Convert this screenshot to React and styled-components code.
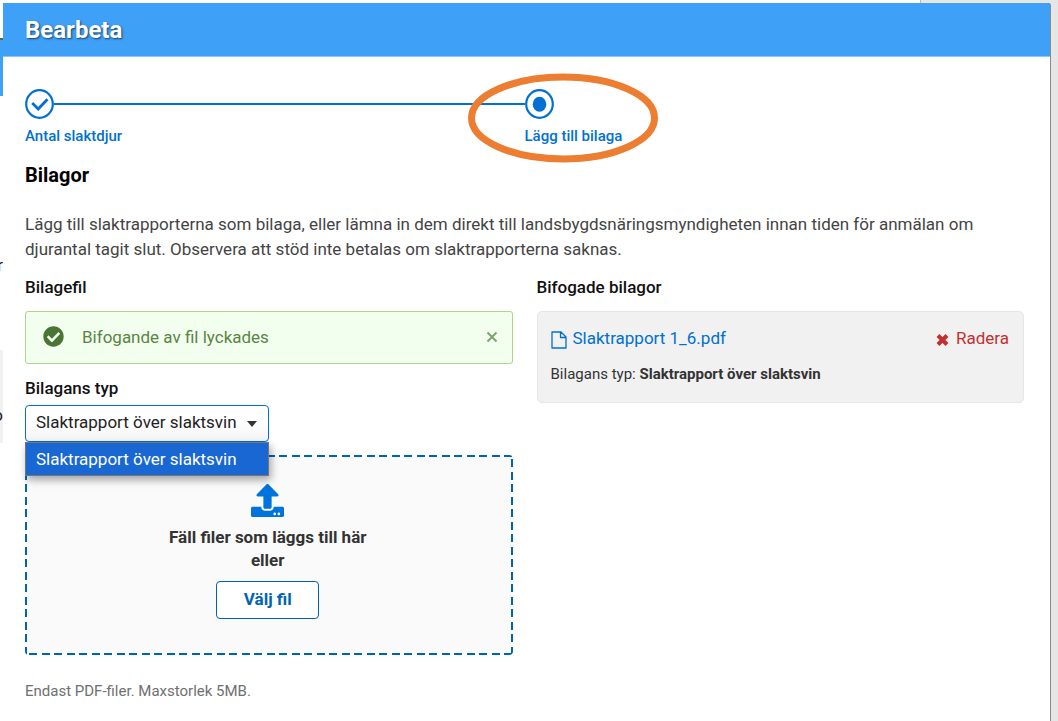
import React from "react";
import styled, { createGlobalStyle } from "styled-components";
import { FaCheckCircle, FaUpload } from "react-icons/fa";

const blue = "#0070d2";
const brand = "#3ea0f6";

const GlobalStyle = createGlobalStyle`
  *, *::before, *::after { box-sizing: border-box; }
  html, body { margin: 0; }
  body {
    background: #fff;
    color: #444;
    font-family: Roboto, "Liberation Sans", sans-serif;
    font-size: 17px;
    line-height: 24px;
  }
  h1, h2, h3, p, ul, ol { margin: 0; padding: 0; }
  ul, ol { list-style: none; }
  button, select { font: inherit; }
`;

const Page = styled.div`
  display: grid;
  grid-template-columns: 3px 1fr 7px;
  min-height: 100vh;
  overflow: hidden;
`;

const Behind = styled.div`
  display: flex;
  flex-direction: column;
  overflow: hidden;
`;

const Strip = styled.div`
  flex: none;
  height: ${(p) => p.$height}px;
  background: ${(p) => p.$color || "transparent"};
  display: flex;
  align-items: center;
  justify-content: flex-end;
  color: #222;
`;

const Gutter = styled.div`
  background: #e6e6e6;
`;

const Main = styled.div`
  display: flex;
  flex-direction: column;
  min-width: 0;
`;

const PageEdge = styled.div`
  display: grid;
  grid-template-columns: 7fr 1fr;
  height: 3px;
`;

const EdgeShade = styled.div`
  background: #e6e6e6;
  border-left: 1px solid #bbb;
`;

const Dialog = styled.section`
  flex: 1;
  background: #fff;
  border-right: 1px solid #8a8a8a;
  border-top-right-radius: 2px;
`;

const Header = styled.header`
  height: 54px;
  padding: 1px 22px 0;
  display: flex;
  align-items: center;
  background: ${brand};
  border-bottom: 1px solid #8cc6fa;
`;

const Title = styled.h1`
  color: #fff;
  font-size: 24px;
  line-height: 28px;
  font-weight: 700;
  text-shadow: 1px 1px 2px rgba(0, 0, 0, 0.6);
`;

const Content = styled.div`
  padding: 32px 26px 20px 22px;
`;

const Steps = styled.ol`
  display: grid;
  grid-template-columns: 1fr 1fr;
`;

const Step = styled.li`
  position: relative;
  color: ${blue};
  font-size: 15px;
  line-height: 20px;
  font-weight: 500;
`;

const StepTrack = styled.div`
  display: flex;
  align-items: center;
  margin-bottom: 7px;
  svg { flex: none; display: block; }
`;

const StepLine = styled.div`
  flex: 1;
  height: 2px;
  background: ${blue};
`;

const Highlight = styled.svg`
  position: absolute;
  left: -57px;
  top: -16px;
  pointer-events: none;
`;

const SectionTitle = styled.h2`
  margin-top: 17px;
  color: #000;
  font-size: 20px;
  line-height: 24px;
  font-weight: 700;
`;

const Intro = styled.p`
  margin-top: 25px;
  font-size: 17px;
  line-height: 25px;
`;

const Columns = styled.div`
  display: grid;
  grid-template-columns: 1fr 1fr;
  gap: 24px;
  align-items: start;
  margin-top: 13px;
`;

const Heading = styled.h3`
  margin-bottom: 12px;
  color: #111;
  font-size: 17px;
  line-height: 24px;
  font-weight: 500;
`;

const Alert = styled.div`
  display: flex;
  align-items: center;
  height: 53px;
  padding: 0 14px 2px 17px;
  border: 1px solid #aed58a;
  border-radius: 3px;
  background: #f3ffee;
  color: #5a8446;
  > svg { flex: none; color: #4b7535; }
`;

const AlertText = styled.span`
  flex: 1;
  margin-left: 18px;
`;

const CloseButton = styled.button`
  display: flex;
  padding: 0;
  border: 0;
  background: none;
  color: #7fa370;
`;

const Label = styled.label`
  display: block;
  margin: 12px 0 5px;
  color: #111;
  font-weight: 500;
`;

const SelectBox = styled.div`
  position: relative;
  width: 244px;
`;

const Select = styled.select`
  display: block;
  width: 100%;
  height: 37px;
  padding: 0 24px 3px 10px;
  appearance: none;
  border: 1px solid ${blue};
  border-radius: 4px;
  background: linear-gradient(#fff 40%, #f4f4f4);
  color: #222;
  outline: none;
`;

const Caret = styled.svg`
  position: absolute;
  right: 12px;
  top: 16px;
  pointer-events: none;
`;

const Options = styled.ul`
  position: absolute;
  z-index: 1;
  top: 100%;
  left: 0;
  right: 0;
  border: 1px solid #767676;
  box-shadow: 2px 4px 8px rgba(0, 0, 0, 0.35);
`;

const Option = styled.li`
  height: 32px;
  padding-left: 10px;
  background: #1967d2;
  color: #fff;
  line-height: 32px;
`;

const dashes = (dir) =>
  `repeating-linear-gradient(${dir}, transparent 0 4px, #0064b4 4px 12px, transparent 12px 17px, #0064b4 17px 25px)`;

const DropZone = styled.div`
  display: flex;
  flex-direction: column;
  align-items: center;
  height: 200px;
  margin-top: 13px;
  padding: 29px 2px 0 0;
  border-radius: 4px;
  background:
    ${dashes("90deg")} top / 100% 2px no-repeat,
    ${dashes("90deg")} bottom / 100% 2px no-repeat,
    ${dashes("180deg")} left / 2px 100% no-repeat,
    ${dashes("180deg")} right / 2px 100% no-repeat,
    #fafafa;
  text-align: center;
`;

const DropText = styled.p`
  margin: 9px 0;
  color: #333;
  font-weight: 700;
  line-height: 23px;
`;

const ChooseButton = styled.button`
  width: 103px;
  height: 38px;
  padding: 0 0 3px;
  border: 1px solid #0064b4;
  border-radius: 4px;
  background: #fff;
  color: #0064b4;
  font-weight: 700;
`;

const Note = styled.p`
  margin-top: 26px;
  color: #707070;
  font-size: 15px;
  line-height: 20px;
`;

const FileCard = styled.article`
  padding: 14px 14px 18px 13px;
  border: 1px solid #e6e6e6;
  border-radius: 5px;
  background: #f1f1f1;
`;

const FileRow = styled.div`
  display: flex;
  align-items: center;
  justify-content: space-between;
  margin-bottom: 14px;
`;

const FileLink = styled.a`
  display: flex;
  align-items: center;
  gap: 6px;
  color: ${blue};
  text-decoration: none;
  svg { margin-top: 4px; }
`;

const RemoveButton = styled.button`
  display: flex;
  align-items: center;
  gap: 7px;
  padding: 0;
  border: 0;
  background: none;
  color: #c23030;
  svg { margin-top: 4px; }
`;

const FileType = styled.p`
  color: #333;
  font-size: 15px;
  line-height: 20px;
`;

function StepIcon({ done }) {
  return (
    <svg width="29" height="30" viewBox="0 0 29 30" fill="none" aria-hidden="true">
      <ellipse cx="14.5" cy="15" rx="13.3" ry="13.8" stroke={blue} strokeWidth="2.2" />
      {done ? (
        <path d="M7.2 14l6 6 9.3-9.8" stroke={blue} strokeWidth="2.8" />
      ) : (
        <ellipse cx="14.5" cy="15.3" rx="6.8" ry="7.5" fill={blue} />
      )}
    </svg>
  );
}

export default function App() {
  return (
    <>
      <GlobalStyle />
      <Page>
        <Behind aria-hidden="true">
          <Strip $height={38} />
          <Strip $height={2} $color="#4b7535" />
          <Strip $height={56} $color={brand} />
          <Strip $height={157} />
          <Strip $height={24}>r</Strip>
          <Strip $height={73} />
          <Strip $height={53} $color="#f1f1f1" />
          <Strip $height={24} $color="#f1f1f1">o</Strip>
          <Strip $height={16} $color="#f1f1f1" />
        </Behind>
        <Main>
          <PageEdge>
            <div />
            <EdgeShade />
          </PageEdge>
          <Dialog aria-labelledby="dialog-title">
            <Header>
              <Title id="dialog-title">Bearbeta</Title>
            </Header>
            <Content>
              <Steps>
                <Step>
                  <StepTrack>
                    <StepIcon done />
                    <StepLine />
                  </StepTrack>
                  Antal slaktdjur
                </Step>
                <Step aria-current="step">
                  <StepTrack>
                    <StepIcon />
                  </StepTrack>
                  Lägg till bilaga
                  <Highlight width="190" height="90" viewBox="0 0 190 90" aria-hidden="true">
                    <ellipse cx="95" cy="45" rx="91.5" ry="41" fill="none" stroke="#ed7d31" strokeWidth="7" />
                  </Highlight>
                </Step>
              </Steps>
              <SectionTitle>Bilagor</SectionTitle>
              <Intro>
                Lägg till slaktrapporterna som bilaga, eller lämna in dem direkt till
                landsbygdsnäringsmyndigheten innan tiden för anmälan om djurantal tagit slut.
                Observera att stöd inte betalas om slaktrapporterna saknas.
              </Intro>
              <Columns>
                <div>
                  <Heading>Bilagefil</Heading>
                  <Alert role="status">
                    <FaCheckCircle size={21} aria-hidden="true" />
                    <AlertText>Bifogande av fil lyckades</AlertText>
                    <CloseButton type="button" aria-label="Stäng">
                      <svg width="12" height="12" viewBox="0 0 12 12" stroke="currentColor" strokeWidth="2">
                        <path d="M1.5 1.5l9 9M10.5 1.5l-9 9" />
                      </svg>
                    </CloseButton>
                  </Alert>
                  <Label htmlFor="attachment-type">Bilagans typ</Label>
                  <SelectBox>
                    <Select id="attachment-type" defaultValue="slaktsvin">
                      <option value="slaktsvin">Slaktrapport över slaktsvin</option>
                    </Select>
                    <Caret width="10" height="6" viewBox="0 0 10 6" aria-hidden="true">
                      <path d="M0 0h10L5 6z" fill="#333" />
                    </Caret>
                    <Options>
                      <Option>Slaktrapport över slaktsvin</Option>
                    </Options>
                  </SelectBox>
                  <DropZone>
                    <FaUpload size={33} color="#0074dc" aria-hidden="true" />
                    <DropText>
                      Fäll filer som läggs till här
                      <br />
                      eller
                    </DropText>
                    <ChooseButton type="button">Välj fil</ChooseButton>
                  </DropZone>
                  <Note>Endast PDF-filer. Maxstorlek 5MB.</Note>
                </div>
                <div>
                  <Heading>Bifogade bilagor</Heading>
                  <FileCard>
                    <FileRow>
                      <FileLink href="#slaktrapport">
                        <svg width="16" height="18" viewBox="0 0 16 18" fill="none" stroke={blue} strokeWidth="1.3" strokeLinejoin="round" aria-hidden="true">
                          <path d="M1 1h9l5 5v11H1zM9.5 1v5.5H15" />
                        </svg>
                        Slaktrapport 1_6.pdf
                      </FileLink>
                      <RemoveButton type="button">
                        <svg width="13" height="12" viewBox="0 0 13 12" stroke="currentColor" strokeWidth="4" aria-hidden="true">
                          <path d="M2 1.5l9 9M11 1.5l-9 9" />
                        </svg>
                        Radera
                      </RemoveButton>
                    </FileRow>
                    <FileType>
                      Bilagans typ: <b>Slaktrapport över slaktsvin</b>
                    </FileType>
                  </FileCard>
                </div>
              </Columns>
            </Content>
          </Dialog>
        </Main>
        <Gutter />
      </Page>
    </>
  );
}
